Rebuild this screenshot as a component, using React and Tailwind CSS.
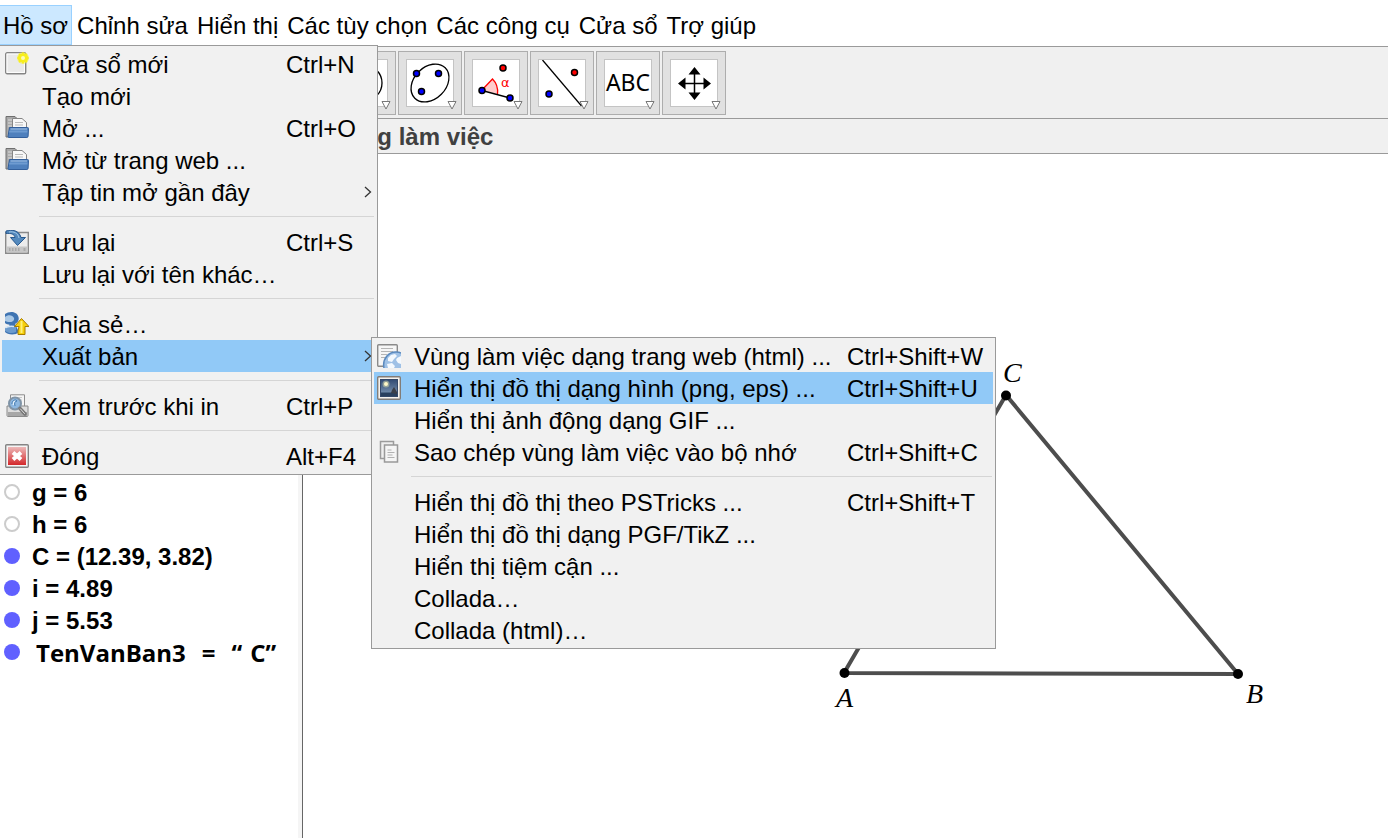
import React from "react";

const menuBar = ["Chỉnh sửa", "Hiển thị", "Các tùy chọn", "Các công cụ", "Cửa sổ", "Trợ giúp"];

const NewWindowIcon = () => (
  <svg className="w-6 h-6" viewBox="0 0 24 24">
    <rect x="0.700" y="0.700" width="20" height="21" rx="1.500" fill="#e9e9e9" stroke="#858585" strokeWidth="1.400" />
    <rect x="2" y="2" width="17.400" height="18.400" fill="none" stroke="#fff" />
    <circle cx="18" cy="6" r="6" fill="#f6f03c" opacity="0.550" />
    <path d="m18 0 1.500 2 2.500-.5.500 2.500 1.500 2-1.500 2-.5 2.500-2.500-.5-1.500 2-1.500-2-2.500.5-.5-2.500-1.500-2 1.500-2 .5-2.500 2.500.5z" fill="#f7ee1d" />
    <circle cx="18" cy="6" r="2" fill="#fdfbb8" />
  </svg>
);

const OpenIcon = () => (
  <svg className="w-6 h-6" viewBox="0 1 24 24">
    <path d="M1 22V1.500h9l2 2h2V22z" fill="#a9a9a9" stroke="#6f6f6f" />
    <path d="M3 5h4M3 8h4M3 11h4" stroke="#ddd" />
    <path d="M7.500 13V3.500H17l4.500 4V13z" fill="#f8f8f8" stroke="#858585" />
    <path d="M10 7.500h8M10 10h8" stroke="#b9b9b9" />
    <path d="M4.500 12.500h18c.7 0 1 .3 1 1l-.4 7.700c0 .8-.5 1.300-1.200 1.300H4c-.7 0-1-.4-1-1.100z" fill="#4f80bd" stroke="#335f9b" />
    <path d="M5.500 14h16.500" stroke="#a9c6e8" />
    <path d="M4.500 15.500h18l-.2 2H4z" fill="#6e9bd1" />
  </svg>
);

const SaveIcon = () => (
  <svg className="w-6 h-6" viewBox="0 0 24 24">
    <path d="M.7 2.500h22.600v20.800H.7z" fill="#ececec" stroke="#8a8a8a" strokeWidth="1.400" />
    <path d="M2 16.500h20V22H2z" fill="#c6c6c6" />
    <path d="M4 19.500h1.500m1.500 0h1.500m1.500 0h1.500m1.500 0h1.500m4 0h2" stroke="#999" strokeWidth="3" opacity="0.600" />
    <path d="M1 1C7-.5 14 0 16 7.500h4.500L12.500 15.500 5.500 7.500H10C9.500 4 6 3 1 3.500z" fill="#5389bd" stroke="#28598f" />
    <path d="M4 2c5-.8 9 1 10 6" stroke="#a5cbea" fill="none" />
  </svg>
);

const ShareIcon = () => (
  <svg className="w-6 h-6" viewBox="0 0 24 24">
    <path d="M0 2C4-1 12-1 13.500 5c.8 3-.5 5.500-3.500 7l4 8-3 2C6 23 2 22 0 20v-4c2-1 4-2 5-3-2-.5-4-1-5-2z" fill="#3f74b2" />
    <path d="M0 5c3-3 8-2 9 1 .5 2-1 4-4 4-2 0-4-.5-5-1z" fill="#a9c8e6" />
    <path d="M0 17c3-3 8-4 11-2v5C7 22 3 21 0 19z" fill="#6c9bcd" />
    <path d="M0 16c3-2 6-2 9-1.500" fill="none" stroke="#d5e5f4" strokeWidth="1.500" />
    <path d="M16.500 6.500 24 14.500h-4v8h-7v-3.500l1-4.500h-4.500z" fill="#f6cf0b" stroke="#a87c00" strokeLinejoin="round" />
    <path d="M16.500 9v12" stroke="#fff07a" strokeWidth="2" />
  </svg>
);

const PreviewIcon = () => (
  <svg className="w-6 h-6" viewBox="0 0 24 24">
    <path d="M5.500.8h14V13h-14z" fill="#f5f5f5" stroke="#8d8d8d" />
    <path d="M8 3.500h9M8 6h9" stroke="#c9c9c9" />
    <path d="M2 12h21v9.500c0 .6-.4 1-1 1H3c-.6 0-1-.4-1-1z" fill="#ddd" stroke="#8a8a8a" />
    <path d="M3 18h19v4H3z" fill="#a7a7a7" />
    <circle cx="10" cy="9.500" r="6" fill="#8db7e0" stroke="#7f93a6" strokeWidth="2" />
    <path d="M7 10c0-4 4-5 5-3-2 0-3 2-2 5" fill="#e3f1fc" stroke="#3e76ae" />
    <path d="m15 14.500 5 5.500" stroke="#777" strokeWidth="3.500" strokeLinecap="round" />
    <path d="m15.500 15 4 4.500" stroke="#ddd" strokeLinecap="round" />
  </svg>
);

const CloseIcon = () => (
  <svg className="w-6 h-6" viewBox="0 0 24 24">
    <defs>
      <linearGradient id="closeRed" x1="0" y1="0" x2="0" y2="1">
        <stop offset="0" stopColor="#edb9b9" />
        <stop offset="1" stopColor="#d3282b" />
      </linearGradient>
    </defs>
    <rect x="0.700" y="0.700" width="22.600" height="22.600" rx="1" fill="#f5f5f5" stroke="#858585" strokeWidth="1.400" />
    <rect x="3" y="3" width="18" height="18" fill="url(#closeRed)" />
    <path d="m8 8.500 8 7m0-7-8 7" stroke="#fff" strokeWidth="4" />
  </svg>
);

const WebPageIcon = () => (
  <svg className="w-6 h-6" viewBox="0 0 24 24">
    <rect x="0.700" y="0.700" width="19.600" height="21.500" rx="1" fill="#f6f6f6" stroke="#8a8a8a" strokeWidth="1.400" />
    <path d="M4 4.500h12M4 7.500h12M4 10.500h6M4 13.500h4" stroke="#b5b5b5" strokeWidth="1.200" />
    <path d="M7 24C5 15 12 7 20 8c2 .2 3 .6 4 1v15z" fill="#9fc1e6" />
    <path d="M7 24C5 15 12 7 20 8c2 .2 3 .6 4 1" fill="none" stroke="#5988bd" strokeWidth="1.500" />
    <path d="M11 14l3-3 4-1 2 2-3 3-2 3-4-1zM20 14l4-2v8l-3-1-2-3zM10 20l5-1 3 3-1 2h-6z" fill="#f4f9fe" />
  </svg>
);

const PictureIcon = () => (
  <svg className="w-6 h-6" viewBox="0 0 24 24">
    <defs>
      <linearGradient id="pictureSky" x1="0" y1="0" x2="0" y2="1">
        <stop offset="0" stopColor="#304a73" />
        <stop offset="1" stopColor="#839db9" />
      </linearGradient>
    </defs>
    <rect x="0.700" y="0.700" width="22.600" height="22.600" rx="1" fill="#f6f3ee" stroke="#827d78" strokeWidth="1.400" />
    <rect x="3.500" y="3.500" width="17" height="17" fill="url(#pictureSky)" stroke="#344868" />
    <path d="M4 16.500h16V20H4z" fill="#29405e" />
    <circle cx="9" cy="8" r="3.500" fill="#c3c9a7" opacity="0.600" />
    <circle cx="9" cy="8" r="2" fill="#fff8c7" />
    <path d="m14 17 1-3 2-3 3 5v2z" fill="#3a3f49" />
  </svg>
);

const CopyIcon = () => (
  <svg className="w-6 h-6" viewBox="0 0 24 24">
    <path d="M3.500 1.500h13v17h-13z" fill="#eee" stroke="#9b9b9b" strokeWidth="1.500" />
    <path d="M7.500 5h13v17h-13z" fill="#f5f5f5" stroke="#999" strokeWidth="1.500" />
    <path d="M10.500 10h4M10.500 12.500h7M10.500 15h5M10.500 17.500h7" stroke="#b1b1b1" />
  </svg>
);

const Chevron = () => (
  <svg className="w-2 h-3 ml-auto mr-[3px]" viewBox="0 0 8 12" fill="none" stroke="#333" strokeWidth="1.300">
    <path d="m1 1 5.500 5L1 11" />
  </svg>
);

const exportItems = [
  { label: "Vùng làm việc dạng trang web (html) ...", shortcut: "Ctrl+Shift+W", icon: WebPageIcon },
  { label: "Hiển thị đồ thị dạng hình (png, eps) ...", shortcut: "Ctrl+Shift+U", icon: PictureIcon, active: true },
  { label: "Hiển thị ảnh động dạng GIF ..." },
  { label: "Sao chép vùng làm việc vào bộ nhớ", shortcut: "Ctrl+Shift+C", icon: CopyIcon },
  null,
  { label: "Hiển thị đồ thị theo PSTricks ...", shortcut: "Ctrl+Shift+T" },
  { label: "Hiển thị đồ thị dạng PGF/TikZ ..." },
  { label: "Hiển thị tiệm cận ..." },
  { label: "Collada…" },
  { label: "Collada (html)…" },
];

// null stands for a separator
const fileItems = [
  { label: "Cửa sổ mới", shortcut: "Ctrl+N", icon: NewWindowIcon },
  { label: "Tạo mới" },
  { label: "Mở ...", shortcut: "Ctrl+O", icon: OpenIcon },
  { label: "Mở từ trang web ...", icon: OpenIcon },
  { label: "Tập tin mở gần đây", arrow: true },
  null,
  { label: "Lưu lại", shortcut: "Ctrl+S", icon: SaveIcon },
  { label: "Lưu lại với tên khác…" },
  null,
  { label: "Chia sẻ…", icon: ShareIcon },
  { label: "Xuất bản", arrow: true, active: true, children: exportItems },
  null,
  { label: "Xem trước khi in", shortcut: "Ctrl+P", icon: PreviewIcon },
  null,
  { label: "Đóng", shortcut: "Alt+F4", icon: CloseIcon },
];

const Menu = ({ items, className, labelWidth }) => (
  <ul className={`absolute z-10 bg-[#f1f1f1] border border-[#9a9a9a] p-0.5 ${className}`}>
    {items.map((item, i) =>
      item === null ? (
        <li key={i} className="h-[18px] pt-2 pl-[37px] pr-px">
          <hr className="border-[#d5d5d5]" />
        </li>
      ) : (
        <li key={i} className="relative">
          <button
            type="button"
            className={`flex items-center w-full h-8 pl-[3px] text-left whitespace-nowrap ${item.active ? "bg-[#91c9f7]" : ""}`}
          >
            <span className="w-6 h-6 shrink-0 mr-[13px]">{item.icon && <item.icon />}</span>
            <span className={`shrink-0 pt-0.5 ${labelWidth}`}>{item.label}</span>
            {item.shortcut && <span className="pt-0.5">{item.shortcut}</span>}
            {item.arrow && <Chevron />}
          </button>
          {item.children && (
            <Menu items={item.children} className="left-full -top-[3px] -ml-1 w-[625px]" labelWidth="w-[433px]" />
          )}
        </li>
      )
    )}
  </ul>
);

const Dot = ({ x, y, fill = "#0000ff" }) => (
  <circle cx={x} cy={y} r="3" fill={fill} stroke="#000" strokeWidth="1.500" />
);

const tools = [
  {
    name: "Đường tròn",
    drawing: <circle cx="24" cy="24" r="18" fill="none" stroke="#000" strokeWidth="1.300" />,
  },
  {
    name: "Đường conic",
    drawing: (
      <>
        <ellipse cx="24" cy="24" rx="21.500" ry="16" transform="rotate(-45 24 24)" fill="none" stroke="#000" strokeWidth="1.300" />
        <Dot x={10.5} y={14.5} />
        <Dot x={32.5} y={14.5} />
        <Dot x={15.5} y={32.5} />
      </>
    ),
  },
  {
    name: "Góc",
    drawing: (
      <>
        <path d="M10 31 20.500 20q6 6 5 15z" fill="#ffcccc" />
        <path d="M10 31 20.500 20q6 6 5 15" fill="none" stroke="#ff0000" strokeWidth="1.300" />
        <path d="m10 31.500 28 7.500" stroke="#000" strokeWidth="1.300" />
        <Dot x={10} y={31.5} />
        <Dot x={38} y={39} />
        <Dot x={31} y={9} fill="#ff0000" />
        <text x="29" y="28" fill="#ff0000" className="text-[13px] font-['DejaVu_Sans',sans-serif]">α</text>
      </>
    ),
  },
  {
    name: "Đối xứng",
    drawing: (
      <>
        <path d="m4.500 1 39 46" stroke="#000" strokeWidth="1.300" />
        <Dot x={36.5} y={13.5} fill="#ff0000" />
        <Dot x={11} y={35} />
      </>
    ),
  },
  {
    name: "Văn bản",
    drawing: (
      <text x="24" y="32" textAnchor="middle" className="text-[23px] font-['Noto_Sans',sans-serif]">ABC</text>
    ),
  },
  {
    name: "Di chuyển",
    drawing: (
      <>
        <path d="M24.500 11v27M11 24.500h27" stroke="#000" strokeWidth="1.500" />
        <path d="m24.500 8 6 7.500h-12zM24.500 41l6-7.500h-12zM8 24.500l7.500-6v12zM41 24.500l-7.500-6v12z" />
      </>
    ),
  },
];

const algebra = [
  { text: "g = 6" },
  { text: "h = 6" },
  { text: "C = (12.39, 3.82)", shown: true },
  { text: "i = 4.89", shown: true },
  { text: "j = 5.53", shown: true },
];

const Marble = ({ shown }) => (
  <span className={`w-4 h-4 mb-0.5 shrink-0 rounded-full ${shown ? "bg-[#6060ff]" : "border-2 border-[#cccccc] bg-white"}`} />
);

const App = () => {
  return (
    <div className="min-h-screen flex flex-col overflow-hidden bg-white text-black text-[24px] leading-8 font-['Liberation_Sans',Arial,sans-serif]">
      {/* Menu bar */}
      <nav className="relative flex gap-px pt-[5px] h-[46px] shrink-0">
        <button type="button" className="h-10 px-[3px] pt-0.5 bg-[#cce8ff] border-r border-y border-[#99d1ff] whitespace-nowrap">
          Hồ sơ
        </button>
        {menuBar.map((name) => (
          <button key={name} type="button" className="h-10 px-1 pt-0.5 whitespace-nowrap">
            {name}
          </button>
        ))}
        <Menu items={fileItems} className="left-0 top-[45px] w-[378px] border-l-0" labelWidth="w-[244px]" />
      </nav>

      {/* Toolbar */}
      <div className="flex gap-0.5 pl-[332px] pt-1 h-[73px] shrink-0 bg-[#f0f0f0] border-y border-[#9a9a9a]">
        {tools.map((tool) => (
          <button
            key={tool.name}
            type="button"
            aria-label={tool.name}
            className="relative w-16 h-16 p-[7px] shrink-0 bg-[#e1e1e1] border border-[#adadad]"
          >
            <svg className="w-12 h-12 bg-white border border-[#c4c4c4]" viewBox="1 1 46 46">
              {tool.drawing}
            </svg>
            <svg className="absolute right-1 bottom-1 w-[10px] h-[10px]" viewBox="0 0 10 10">
              <path d="M1 1.500h8L5 9z" fill="#fff" stroke="#777" />
            </svg>
          </button>
        ))}
      </div>

      {/* Panel titles */}
      <div className="flex h-[35px] shrink-0 bg-[#f0f0f0] border-b border-[#9a9a9a]">
        <h2 className="pl-[332px] pt-0.5 font-bold text-[#404040]">Vùng làm việc</h2>
      </div>

      <main className="flex flex-1">
        {/* Algebra view */}
        <aside className="flex w-[303px] shrink-0 border-r border-[#666] font-bold">
          <ul className="flex-1 pt-[323px] border-r-4 border-[#f5f5f5]">
            {algebra.map((row) => (
              <li key={row.text} className="flex items-center gap-3 h-8 pl-1 whitespace-nowrap">
                <Marble shown={row.shown} />
                {row.text}
              </li>
            ))}
            <li className="flex items-center gap-4 h-8 pl-1 whitespace-nowrap font-['Open_Sans',sans-serif]">
              <Marble shown />
              <span>TenVanBan3</span>
              <span>=</span>
              <span className="flex gap-2">
                <span>“</span>
                <span>C”</span>
              </span>
            </li>
          </ul>
        </aside>

        {/* Graphics view */}
        <section className="flex-1 flex">
          <svg className="w-full min-h-[600px]">
            <path d="M541 519 935 520 703 241z" fill="none" stroke="#4d4d4d" strokeWidth="4" />
            <circle cx="541.500" cy="519" r="5" />
            <circle cx="935" cy="520" r="5" />
            <circle cx="703" cy="241.500" r="5" />
            <g className="text-[28px] italic font-['Liberation_Serif',serif]">
              <text x="533" y="553">A</text>
              <text x="943" y="549">B</text>
              <text x="700" y="228">C</text>
            </g>
          </svg>
        </section>
      </main>
    </div>
  );
};

export default App;
